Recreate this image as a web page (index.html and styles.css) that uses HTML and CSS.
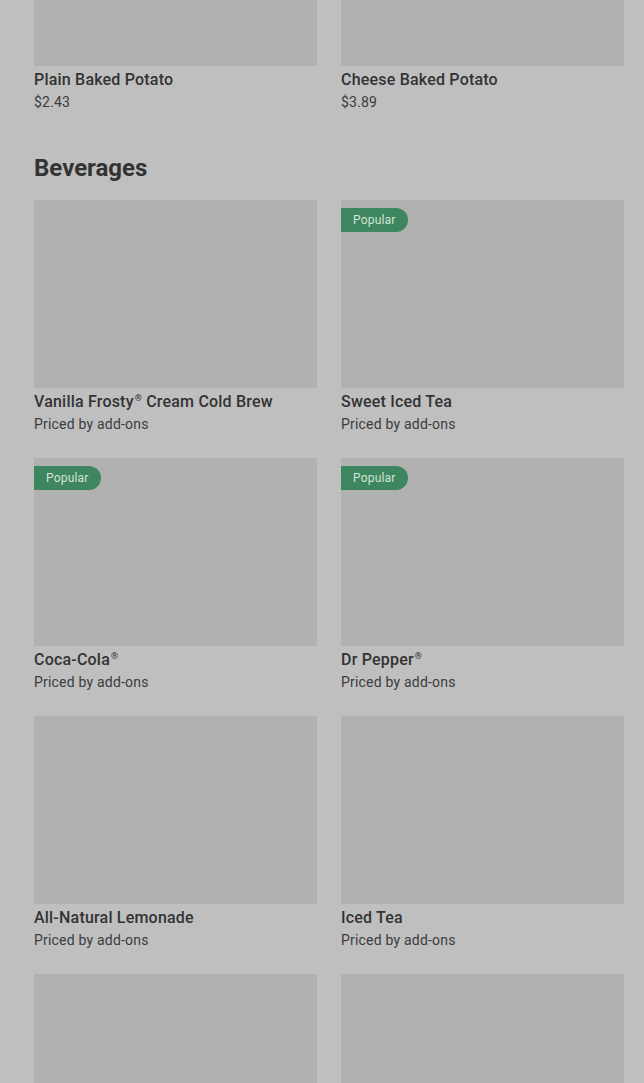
FILE: index.html
```html
<!DOCTYPE html>
<html lang="en">
<head>
    <meta charset="UTF-8">
    <meta name="viewport" content="width=device-width, initial-scale=1.0">
    <title>Menu</title>
    <link rel="stylesheet" href="styles.css">
</head>
<body>
    <div class="menu">
        <section class="menu-section first">
            <div class="item-grid">
                <div class="item">
                    <div class="item-image"></div>
                    <p class="item-name">Plain Baked Potato</p>
                    <p class="item-price">$2.43</p>
                </div>
                <div class="item">
                    <div class="item-image"></div>
                    <p class="item-name">Cheese Baked Potato</p>
                    <p class="item-price">$3.89</p>
                </div>
            </div>
        </section>

        <section class="menu-section">
            <h2 class="section-title">Beverages</h2>
            <div class="item-grid">
                <div class="item">
                    <div class="item-image"></div>
                    <p class="item-name">Vanilla Frosty<sup>®</sup> Cream Cold Brew</p>
                    <p class="item-price">Priced by add-ons</p>
                </div>
                <div class="item">
                    <div class="item-image"><span class="badge">Popular</span></div>
                    <p class="item-name">Sweet Iced Tea</p>
                    <p class="item-price">Priced by add-ons</p>
                </div>
                <div class="item">
                    <div class="item-image"><span class="badge">Popular</span></div>
                    <p class="item-name">Coca-Cola<sup>®</sup></p>
                    <p class="item-price">Priced by add-ons</p>
                </div>
                <div class="item">
                    <div class="item-image"><span class="badge">Popular</span></div>
                    <p class="item-name">Dr Pepper<sup>®</sup></p>
                    <p class="item-price">Priced by add-ons</p>
                </div>
                <div class="item">
                    <div class="item-image"></div>
                    <p class="item-name">All-Natural Lemonade</p>
                    <p class="item-price">Priced by add-ons</p>
                </div>
                <div class="item">
                    <div class="item-image"></div>
                    <p class="item-name">Iced Tea</p>
                    <p class="item-price">Priced by add-ons</p>
                </div>
                <div class="item">
                    <div class="item-image"></div>
                </div>
                <div class="item">
                    <div class="item-image"></div>
                </div>
            </div>
        </section>
    </div>
</body>
</html>
```

FILE: styles.css
```css
body {
    margin: 0;
    background: #bfbfbf; /* page dimmed behind an overlay */
    font-family: Roboto, "Liberation Sans", sans-serif;
    color: #333;
    overflow: hidden;
}

.menu {
    padding: 0 20px 0 34px;
}

.menu-section.first {
    margin-top: -122px; /* page is scrolled */
    margin-bottom: 40px;
}

.section-title {
    margin: 0 0 16px;
    font-size: 24px;
    line-height: 32px;
    font-weight: 700;
    letter-spacing: 0;
    color: #333;
}

.item-grid {
    display: grid;
    grid-template-columns: 283px 283px;
    column-gap: 24px;
    row-gap: 24px;
}

.item-image {
    position: relative;
    height: 188px;
    background: #b1b1b1;
}

.badge {
    position: absolute;
    top: 8px;
    left: 0;
    height: 24px;
    padding: 0 12px;
    border-radius: 0 12px 12px 0;
    background: #3e8660;
    color: #d3e3d8;
    font-size: 12px;
    line-height: 24px;
    letter-spacing: 0.2px;
}

.item-name {
    margin: 3px 0 0;
    font-size: 16px;
    line-height: 22px;
    font-weight: 500;
    letter-spacing: 0.2px;
    color: #333;
}

.item-name sup {
    font-size: 9px;
    line-height: 0;
    vertical-align: 6px;
    margin-left: 1px;
}

.item-price {
    margin: 1px 0 0;
    font-size: 14px;
    line-height: 20px;
    letter-spacing: 0.2px;
    color: #3c3c3c;
}
```
